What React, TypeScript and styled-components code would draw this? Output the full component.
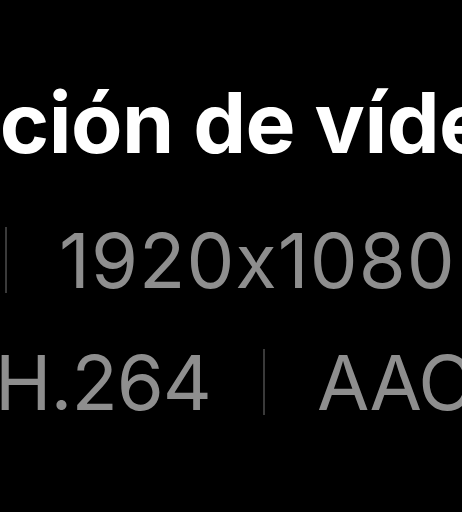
import React, { FC } from 'react';
import styled, { createGlobalStyle } from 'styled-components';

const GlobalStyle = createGlobalStyle`
  html, body {
    margin: 0;
    padding: 0;
    background: #000;
  }
  body {
    font-family: Inter, "Noto Sans", "Liberation Sans", sans-serif;
    -webkit-font-smoothing: antialiased;
  }
`;

const App: FC = () => {
  return (
    <>
      <GlobalStyle />
      <Frame>
        {/* title */}
        <Title>Información de vídeo</Title>
        {/* format row */}
        <MetaRow $offset={5} $gap={52} $top={57}>
          <Divider />
          <MetaText $tracking={1}>1920x1080</MetaText>
          <Divider />
          <MetaText>30 fps</MetaText>
        </MetaRow>
        {/* codec row */}
        <MetaRow $offset={-5} $gap={52} $top={46}>
          <MetaText>H.264</MetaText>
          <Divider />
          <MetaText>AAC</MetaText>
        </MetaRow>
      </Frame>
    </>
  );
};

const Frame = styled.div`
  width: 462px;
  height: 512px;
  overflow: hidden;
  background: #000;
  padding-top: 81px;
  box-sizing: border-box;
  display: flex;
  flex-direction: column;
`;

const Title = styled.h1`
  margin: 0 0 0 -316px;
  font-size: 84px;
  font-weight: 700;
  line-height: 1;
  color: #fff;
  white-space: nowrap;
  letter-spacing: -0.5px;
`;

const MetaRow = styled.div<{ $offset: number; $gap: number; $top: number }>`
  display: flex;
  align-items: center;
  gap: ${(p) => p.$gap}px;
  margin-left: ${(p) => p.$offset}px;
  margin-top: ${(p) => p.$top}px;
  white-space: nowrap;
`;

const MetaText = styled.span<{ $tracking?: number }>`
  font-size: 76px;
  font-weight: 400;
  line-height: 1;
  letter-spacing: ${(p) => p.$tracking ?? -1}px;
  color: #8e8e8e;
  flex-shrink: 0;
  font-feature-settings: "calt" 0;
`;

const Divider = styled.span`
  width: 2px;
  height: 66px;
  background: #3a3a3a;
  flex-shrink: 0;
`;

export default App;
